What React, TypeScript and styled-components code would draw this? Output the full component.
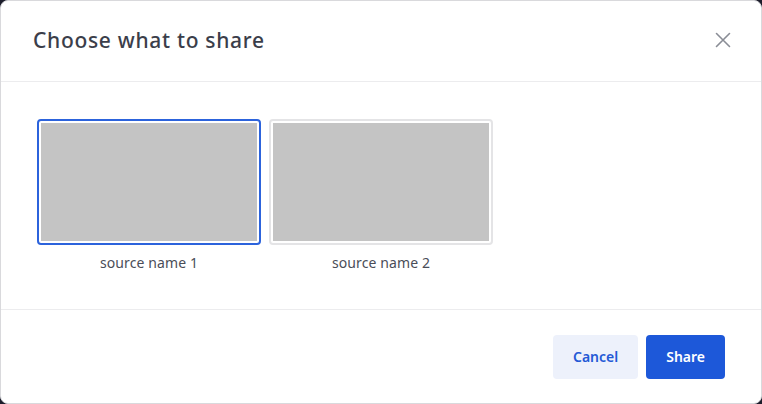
import React, { useState } from "react";
import styled, { createGlobalStyle } from "styled-components";

const GlobalStyle = createGlobalStyle`
  html, body {
    margin: 0;
    padding: 0;
    background: #1c1d2b;
  }
  #root {
    width: 762px;
    height: 404px;
  }
`;

const Dialog = styled.div`
  box-sizing: border-box;
  width: 762px;
  height: 404px;
  background: #ffffff;
  border: 1px solid #d9d9dc;
  border-radius: 8px;
  display: flex;
  flex-direction: column;
  overflow: hidden;
`;

const Header = styled.div`
  box-sizing: border-box;
  height: 81px;
  padding: 0 26px 2px 32px;
  display: flex;
  align-items: center;
  justify-content: space-between;
  border-bottom: 1px solid #ececee;
`;

const Title = styled.h2`
  margin: 0;
  font-family: "Noto Sans", "Open Sans", sans-serif;
  font-size: 21px;
  font-weight: 500;
  color: #3b3e4a;
  letter-spacing: 0.7px;
`;

const CloseButton = styled.button`
  width: 24px;
  height: 24px;
  padding: 0;
  border: none;
  background: transparent;
  display: flex;
  align-items: center;
  justify-content: center;
  cursor: pointer;
  color: #8a8d96;
`;

const Body = styled.div`
  flex: 1;
  padding: 37px 36px 0;
  display: flex;
  gap: 8px;
  align-items: flex-start;
`;

const Source = styled.div`
  width: 224px;
  display: flex;
  flex-direction: column;
  align-items: center;
  cursor: pointer;
`;

const Thumb = styled.div<{ $selected: boolean }>`
  box-sizing: border-box;
  width: 224px;
  height: 126px;
  padding: 2px;
  border: 2px solid ${(p) => (p.$selected ? "#2c63dc" : "#e4e4e6")};
  border-radius: 4px;
  background: #ffffff;
`;

const Preview = styled.div`
  width: 100%;
  height: 100%;
  background: #c4c4c4;
`;

const Label = styled.span`
  margin-top: 8px;
  font-family: "Noto Sans", "Open Sans", sans-serif;
  font-size: 14px;
  line-height: 19px;
  color: #4a4d58;
  letter-spacing: 0.1px;
`;

const Footer = styled.div`
  box-sizing: border-box;
  height: 94px;
  padding: 0 36px 0 0;
  border-top: 1px solid #ececee;
  display: flex;
  align-items: center;
  justify-content: flex-end;
  gap: 8px;
`;

const Button = styled.button<{ $primary?: boolean }>`
  height: 44px;
  padding: 0 20px;
  border: none;
  border-radius: 4px;
  font-family: "Noto Sans", "Open Sans", sans-serif;
  font-size: 14px;
  font-weight: 600;
  cursor: pointer;
  background: ${(p) => (p.$primary ? "#1d58d9" : "#edf1fb")};
  color: ${(p) => (p.$primary ? "#ffffff" : "#2459d6")};
`;

const sources = ["source name 1", "source name 2"];

const App = () => {
  const [selected, setSelected] = useState(0);

  return (
    <>
      <GlobalStyle />
      <Dialog>
        <Header>
          <Title>Choose what to share</Title>
          <CloseButton aria-label="Close">
            <svg width="18" height="18" viewBox="0 0 18 18" fill="none">
              <path
                d="M2.5 2.5L15.5 15.5M15.5 2.5L2.5 15.5"
                stroke="currentColor"
                strokeWidth="1.6"
                strokeLinecap="round"
              />
            </svg>
          </CloseButton>
        </Header>
        <Body>
          {sources.map((name, i) => (
            <Source key={name} onClick={() => setSelected(i)}>
              <Thumb $selected={selected === i}>
                <Preview />
              </Thumb>
              <Label>{name}</Label>
            </Source>
          ))}
        </Body>
        <Footer>
          <Button>Cancel</Button>
          <Button $primary>Share</Button>
        </Footer>
      </Dialog>
    </>
  );
};

export default App;
